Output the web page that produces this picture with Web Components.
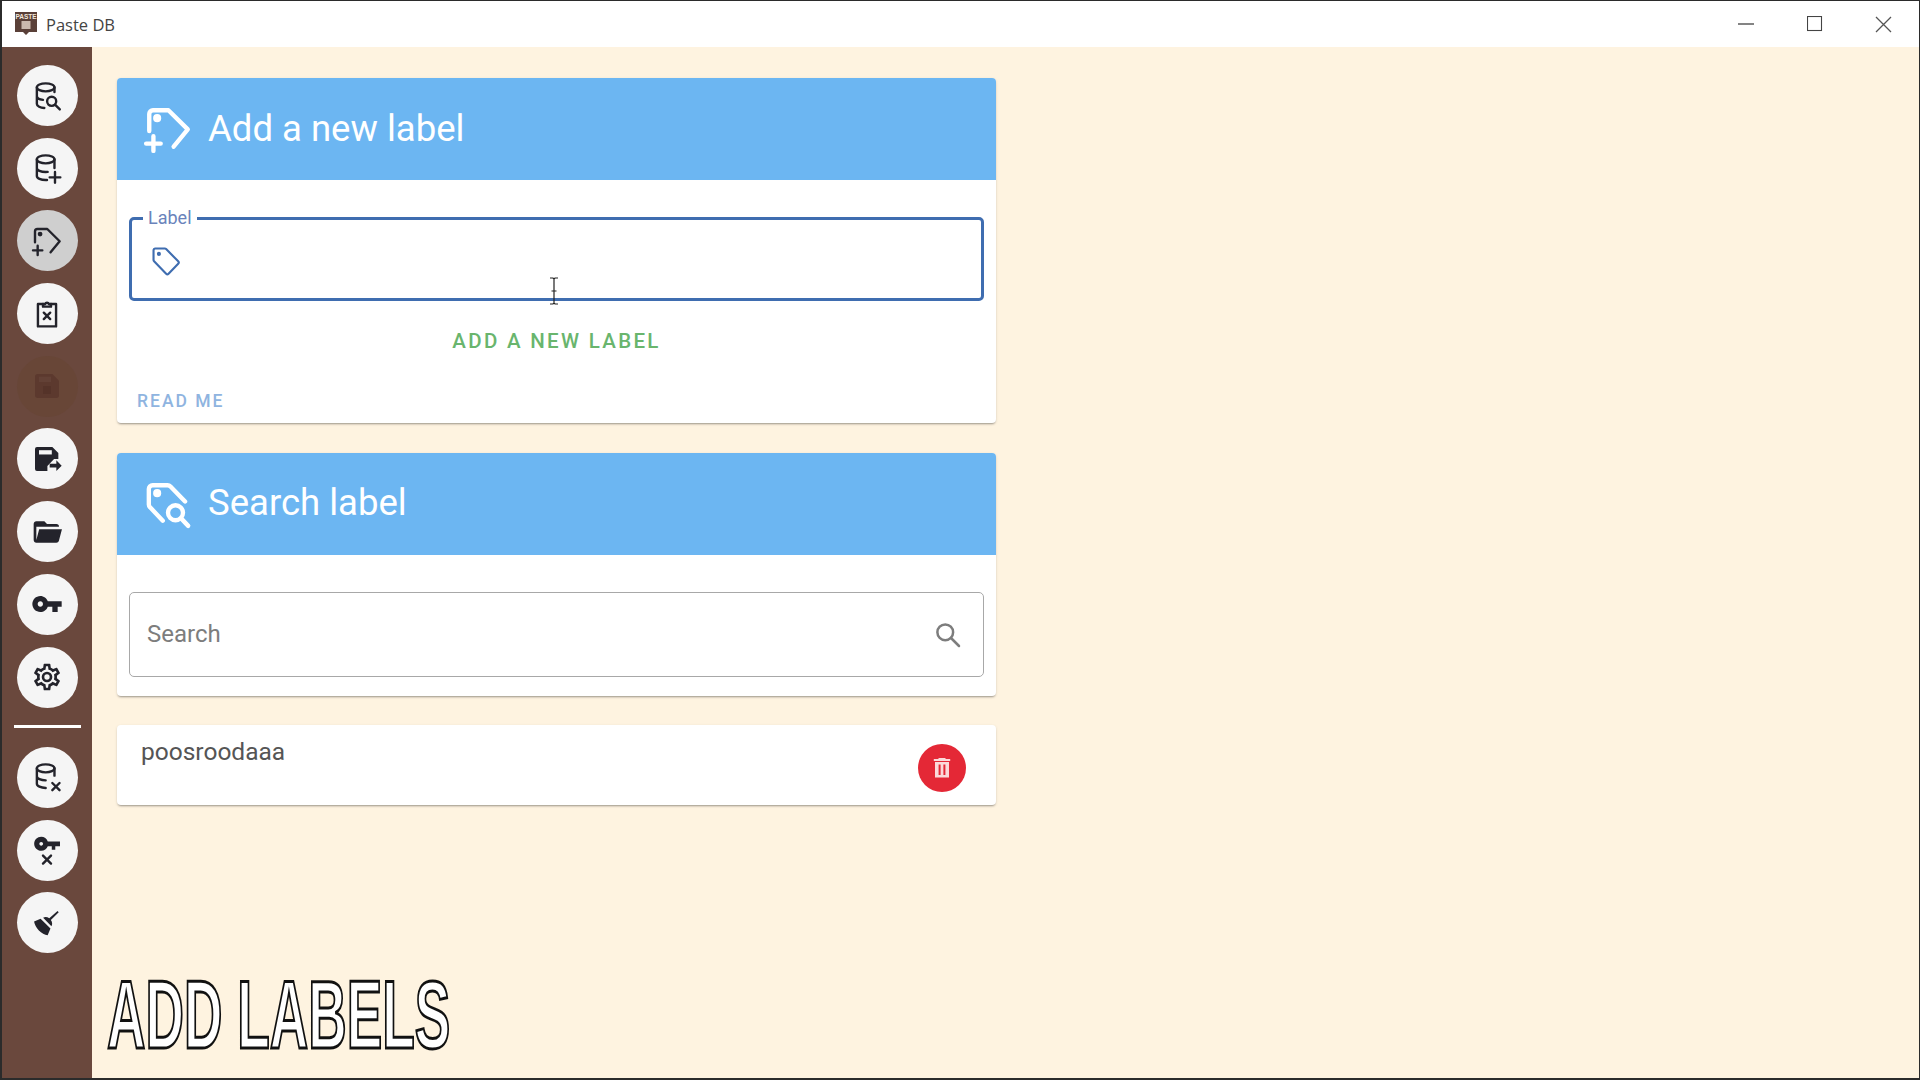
<!DOCTYPE html>
<html lang="en">
<head>
<meta charset="utf-8">
<title>Paste DB</title>
<style>
html, body { margin: 0; height: 100%; background: #fef3e0; }
body { font-family: Roboto, "Liberation Sans", sans-serif; }
</style>
</head>
<body>
<paste-window>
  <rail-button icon="dbSearch"></rail-button>
  <rail-button icon="dbPlus"></rail-button>
  <rail-button icon="tagPlus" state="active"></rail-button>
  <rail-button icon="clipX"></rail-button>
  <rail-button icon="saveDot" state="off"></rail-button>
  <rail-button icon="saveMove"></rail-button>
  <rail-button icon="folder"></rail-button>
  <rail-button icon="key"></rail-button>
  <rail-button icon="cog"></rail-button>
  <rail-rule></rail-rule>
  <rail-button icon="dbX"></rail-button>
  <rail-button icon="keyX"></rail-button>
  <rail-button icon="broom"></rail-button>

  <panel-card slot="main" heading="Add a new label" icon="tagPlus">
    <label-form></label-form>
  </panel-card>
  <panel-card slot="main" heading="Search label" icon="tagSearch">
    <search-field></search-field>
  </panel-card>
  <label-row slot="main" name="poosroodaaa"></label-row>
</paste-window>

<script>
const ICONS = {
  dbSearch: `<g class="s"><ellipse cx="11" cy="5.5" rx="6.6" ry="3"/><path d="M4.4 5.5V18c0 1.6 2.6 2.9 5.6 3M17.6 5.500V9M4.4 12c0 1.5 2 2.6 4.6 2.9"/><circle cx="15.5" cy="16" r="3.4"/><path d="M18 18.500l3.600 3.600"/></g>`,
  dbPlus: `<g class="s"><ellipse cx="11" cy="5.5" rx="6.6" ry="3"/><path d="M4.4 5.5V18c0 1.7 3 3 6.6 3h1M17.6 5.5V12M4.4 12c0 1.7 3 3 6.6 3 .6 0 1 0 1.5-.1M18 15v8M14 19h8"/></g>`,
  dbX: `<g class="s"><ellipse cx="11" cy="5.5" rx="6.6" ry="3"/><path d="M4.4 5.5V17c0 1.8 3 3.200 6.600 3.200M17.600 5.500V11M4.400 11.500c0 1.700 3 3 6.600 3M16 16.500l5.400 5.400M21.400 16.500L16 21.900"/></g>`,
  tagPlus: `<g class="s"><path d="M3 13V4.8C3 3.8 3.800 3 4.800 3h7.400l9.300 9.200-6.800 8.300"/><circle cx="6.800" cy="6.800" r=".9" class="f"/><path d="M5 15.500v7M1.500 19h7"/></g>`,
  tagSearch: `<g class="s"><path d="M9.500 20L3.400 13.600C3 13.200 2.800 12.700 2.800 12.200V4.800C2.800 3.800 3.600 3 4.600 3h7.200c.5 0 1 .2 1.400.6l7 7.200"/><circle cx="6.800" cy="6.800" r=".9" class="f"/><circle cx="15.600" cy="16.200" r="3.600"/><path d="M18.300 18.900l3.400 3.600"/></g>`,
  tag: `<g class="s"><path d="M3.200 4.400c0-.7.5-1.200 1.200-1.200h6.800c.3 0 .6.1.9.4l8.500 8.600c.5.5.5 1.200 0 1.700l-6.800 7.100c-.5.5-1.200.5-1.700 0L3.600 12.200c-.3-.3-.4-.6-.4-.9z"/><circle cx="7" cy="7" r=".7" class="f"/></g>`,
  clipX: `<g class="s"><path d="M9 4.500H5.200v16.800h13.600V4.500H15"/><path d="M9 6.500V4.500h1.600a1.500 1.500 0 0 1 2.800 0H15v2z"/><path d="M9.600 11l4.800 4.800M14.400 11l-4.800 4.800"/></g>`,
  saveDot: `<path d="M5 3h11l5 5v11a2 2 0 0 1-2 2H5a2 2 0 0 1-2-2V5a2 2 0 0 1 2-2z" fill="currentColor"/><rect x="6" y="5" width="9" height="4" fill="#634136"/><rect x="9" y="12" width="6" height="6" fill="#553329"/>`,
  saveMove: `<path d="M4.500 3H16l4.500 4.500V12h-3.200l-5 5.200V21h-7.800A1.500 1.500 0 0 1 3 19.500v-15A1.500 1.500 0 0 1 4.500 3z" fill="currentColor"/><rect x="6" y="5.400" width="9.600" height="3.200" fill="#f5f5f5"/><path d="M14 15.600h5V13l4 4-4 4v-2.600h-5z" fill="currentColor"/>`,
  folder: `<path d="M19 20H4c-1.110 0-2-.9-2-2V6c0-1.110.89-2 2-2h6l2 2h7a2 2 0 0 1 2 2H4v10l2.140-8h17.070l-2.280 8.500c-.23.87-1.010 1.500-1.930 1.500z" fill="currentColor"/>`,
  key: `<path d="M7 14c-1.100 0-2-.9-2-2s.9-2 2-2 2 .9 2 2-.9 2-2 2m5.600-4C11.800 7.700 9.600 6 7 6c-3.300 0-6 2.700-6 6s2.700 6 6 6c2.600 0 4.800-1.700 5.600-4H16v4h4v-4h3v-4H12.600z" fill="currentColor"/>`,
  keyX: `<g transform="translate(1.500 -3.200) scale(.88)"><path d="M7 13.600c-.9 0-1.600-.7-1.600-1.600s.7-1.600 1.600-1.600 1.600.7 1.600 1.600-.7 1.600-1.600 1.600m5.600-3.600C11.800 7.700 9.600 6 7 6c-3.300 0-6 2.700-6 6s2.700 6 6 6c2.600 0 4.800-1.700 5.600-4H16v3h3v-3h4v-4H12.600z" fill="currentColor"/></g><path class="s" d="M9 16.200l6 6M15 16.200l-6 6"/>`,
  cog: `<path fill-rule="evenodd" fill="currentColor" d="M12 8a4 4 0 0 1 4 4 4 4 0 0 1-4 4 4 4 0 0 1-4-4 4 4 0 0 1 4-4m0 2a2 2 0 0 0-2 2 2 2 0 0 0 2 2 2 2 0 0 0 2-2 2 2 0 0 0-2-2m-2 12c-.25 0-.46-.18-.5-.42l-.37-2.650c-.63-.25-1.170-.59-1.690-.99l-2.490 1.010c-.22.08-.49 0-.61-.22l-2-3.460c-.13-.22-.07-.49.12-.64l2.110-1.660L4.500 12l.07-1-2.110-1.630c-.19-.15-.25-.42-.12-.64l2-3.460c.12-.22.39-.31.61-.22l2.490 1c.52-.39 1.060-.73 1.690-.98l.37-2.650c.04-.24.25-.42.5-.42h4c.25 0 .46.18.5.42l.37 2.650c.63.25 1.170.59 1.690.98l2.490-1c.22-.09.49 0 .61.22l2 3.460c.13.22.07.49-.12.64L19.430 11l.07 1-.07 1 2.110 1.630c.19.15.25.42.12.64l-2 3.460c-.12.22-.39.31-.61.22l-2.490-1c-.52.39-1.060.73-1.690.98l-.37 2.650c-.04.24-.25.42-.5.42h-4m1.250-18l-.37 2.610c-1.200.25-2.260.89-3.030 1.780L5.440 7.350l-.75 1.300L6.800 10.200c-.4 1.170-.4 2.440 0 3.600l-2.120 1.560.75 1.300 2.430-1.040c.77.88 1.820 1.520 3.010 1.760l.37 2.620h1.520l.37-2.610c1.190-.25 2.240-.89 3.010-1.770l2.430 1.040.75-1.300-2.120-1.550c.4-1.170.4-2.440 0-3.610l2.110-1.550-.75-1.300-2.410 1.040c-.77-.89-1.830-1.530-3.030-1.770L12.750 4h-1.500z"/>`,
  broom: `<path fill="currentColor" d="M19.900 3l.9.9-5.900 5.900c1.100 1.500 1.300 3.400.4 4.600L9.100 8.100c1.200-.9 3-.8 4.600.3L19.900 3zM5.900 17.600c-2-2-3.200-4.400-3.600-6.700l4.900-2.100 7.400 7.400-2.100 4.900c-2.200-.3-4.600-1.600-6.600-3.500z"/>`,
  magnify: `<g class="s"><circle cx="9.800" cy="9.800" r="6.300"/><path d="M14.400 14.400l6.400 6.400"/></g>`,
  trash: `<path fill="currentColor" fill-rule="evenodd" d="M5 6h14v15.500H5zM3.800 3H8l1-1h6l1 1h4.200v2H3.800zM8.600 8.500v10.500h2V8.500zM13.400 8.500v10.500h2V8.500z"/>`
};

function iconSvg(name, size) {
  return `<svg viewBox="0 0 24 24" width="${size}" height="${size}" aria-hidden="true">
    <style>.s{fill:none;stroke:currentColor;stroke-width:var(--sw,1.7);stroke-linecap:round;stroke-linejoin:round}.f{fill:currentColor}</style>
    ${ICONS[name]}</svg>`;
}

class PasteWindow extends HTMLElement {
  constructor() {
    super();
    this.root = this.attachShadow({mode:'open'});
  }
  connectedCallback() {
    this.root.innerHTML = `
    <style>
    :host { display: grid; grid-template: 46px 1fr / 90px 1fr; height: 100vh; box-sizing: border-box;
      border: 1px solid #2b2b2b; border-left-width: 2px; border-bottom-width: 2px; position: relative; overflow: hidden; }
    header { grid-column: 1 / 3; background: #fff; display: flex; align-items: center; padding-left: 13px; color: #444;
      font: 16.500px "Open Sans", "Noto Sans", sans-serif; }
    header svg { margin-right: 9px; }
    .win { margin-left: auto; margin-right: 1px; display: flex; }
    .win span { width: 69px; height: 46px; display: flex; align-items: center; justify-content: center; }
    .win svg { margin: 0; }
    nav { background: #6a483d; display: flex; flex-direction: column; align-items: center; padding-top: 18px; gap: 11.7px; }
    main { background: #fef3e0; padding: 31px 0 0 25px; display: flex; flex-direction: column; gap: 29.500px; width: 879px; }
    .caption { position: absolute; left: 105px; bottom: 29px; margin: 0; font: 700 96px/68px "Liberation Sans", sans-serif;
      color: #fff; -webkit-text-stroke: 3px #111; transform-origin: left bottom; transform: scaleX(.555); white-space: nowrap; }
    </style>
    <header>
      <svg width="22" height="24" viewBox="0 0 22 24"><path d="M0 0h22v20h-8l-3 3-3-3H0z" fill="#5a4038"/>
        <text x="11" y="7" text-anchor="middle" font-family="Liberation Sans" font-size="6.500" font-weight="700" fill="#f1e6dc">PASTE</text>
        <rect x="6.500" y="9" width="9" height="8" fill="#cbb9ae"/></svg>
      <span>Paste DB</span>
      <div class="win">
        <span><svg width="16" height="16" viewBox="0 0 16 16"><path d="M0 8h16" stroke="#333" stroke-width="1.200"/></svg></span>
        <span><svg width="16" height="16" viewBox="0 0 16 16"><rect x=".5" y=".5" width="14" height="14" fill="none" stroke="#444" stroke-width="1.100"/></svg></span>
        <span><svg width="17" height="17" viewBox="0 0 17 17"><path d="M1 1l15 15M16 1L1 16" stroke="#555" stroke-width="1.300"/></svg></span>
      </div>
    </header>
    <nav><slot></slot></nav>
    <main><slot name="main"></slot></main>
    <p class="caption">ADD LABELS</p>
    `;
  }
}

class RailButton extends HTMLElement {
  constructor() {
    super();
    this.root = this.attachShadow({mode:'open'});
  }
  connectedCallback() {
    this.root.innerHTML = `
    <style>
    :host { display: flex; align-items: center; justify-content: center; width: 61px; height: 61px; border-radius: 50%;
      background: #f5f5f5; color: #23232b; --sw: 1.800; }
    :host([state=active]) { background: #cfcfcf; }
    :host([state=off]) { background: #684637; color: #5c392e; }
    svg { display: block; }
    </style>
    ${iconSvg(this.getAttribute('icon'), 32)}
    `;
  }
}

class RailRule extends HTMLElement {
  constructor() {
    super();
    this.attachShadow({mode:'open'}).innerHTML = `
    <style>:host { display: block; width: 67px; height: 3px; margin: 6px 0 7px; background: #fff; }</style>`;
  }
}

class PanelCard extends HTMLElement {
  constructor() {
    super();
    this.root = this.attachShadow({mode:'open'});
  }
  connectedCallback() {
    this.root.innerHTML = `
    <style>
    :host { display: block; background: #fff; border-radius: 4px; overflow: hidden;
      box-shadow: 0 2px 2px -1px rgba(0,0,0,.3), 0 1px 3px rgba(0,0,0,.12); color: #333; }
    .bar { height: 102px; background: #6cb6f2; color: #fff; display: flex; align-items: center; padding-left: 26px; gap: 15px; --sw: 2.100; }
    h2 { margin: -2px 0 0; font: 400 36.500px Roboto, sans-serif; }
    </style>
    <div class="bar">${iconSvg(this.getAttribute('icon'), 50)}<h2>${this.getAttribute('heading')}</h2></div>
    <slot></slot>
    `;
  }
}

class LabelForm extends HTMLElement {
  constructor() {
    super();
    this.root = this.attachShadow({mode:'open'});
  }
  connectedCallback() {
    this.root.innerHTML = `
    <style>
    :host { display: block; padding: 27px 12px 0; height: 243px; box-sizing: border-box; position: relative; }
    fieldset { margin: 0; padding: 0 0 0 17px; height: 94px; box-sizing: border-box; border: 3px solid #3f6db0; border-radius: 5px;
      display: flex; align-items: center; color: #3f6db0; --sw: 1.500; }
    legend { font: 18px Roboto, sans-serif; color: #6a83bb; padding: 0 5px; margin-left: -6px; line-height: 22px; }
    svg { margin-top: -6px; }
    .add { text-align: center; color: #69b56d; font: 500 20.500px Roboto, sans-serif; letter-spacing: 2.300px; margin-top: 28px; }
    .read { color: #8fb4e0; font: 500 17.500px Roboto, sans-serif; letter-spacing: 2px; margin: 38px 0 0 8px; }
    .cursor { position: absolute; left: 431px; top: 97px; margin: 0; }
    </style>
    <fieldset><legend>Label</legend>${iconSvg('tag', 34)}</fieldset>
    <div class="add">ADD A NEW LABEL</div>
    <div class="read">READ ME</div>
    <svg class="cursor" width="12" height="28" viewBox="0 0 12 28"><path d="M2 1h3l1 1 1-1h3M6 2v24M2 27h3l1-1 1 1h3M3.500 14h5" fill="none" stroke="#222" stroke-width="1.200"/></svg>
    `;
  }
}

class SearchField extends HTMLElement {
  constructor() {
    super();
    this.root = this.attachShadow({mode:'open'});
  }
  connectedCallback() {
    this.root.innerHTML = `
    <style>
    :host { display: block; padding: 37px 12px 19px; }
    .box { height: 85px; box-sizing: border-box; border: 1.500px solid #a8a8a8; border-radius: 5px; display: flex; align-items: center;
      justify-content: space-between; padding: 0 20px 0 17px; color: #7d7d7d; font: 24px Roboto, sans-serif; --sw: 2; }
    svg { margin-top: 2px; }
    </style>
    <div class="box"><span>Search</span>${iconSvg('magnify', 30)}</div>
    `;
  }
}

class LabelRow extends HTMLElement {
  constructor() {
    super();
    this.root = this.attachShadow({mode:'open'});
  }
  connectedCallback() {
    this.root.innerHTML = `
    <style>
    :host { display: flex; justify-content: space-between; height: 80px; background: #fff; border-radius: 4px; padding: 12px 30px 0 24px; box-sizing: border-box;
      box-shadow: 0 2px 2px -1px rgba(0,0,0,.3), 0 1px 3px rgba(0,0,0,.12); color: #555; font: 24.500px Roboto, sans-serif; }
    button { width: 48px; height: 48px; margin-top: 7px; border: 0; padding: 0; border-radius: 50%; background: #e42836; color: #fbd9d9;
      display: flex; align-items: center; justify-content: center; }
    </style>
    <span>${this.getAttribute('name')}</span>
    <button>${iconSvg('trash', 24)}</button>
    `;
  }
}

customElements.define('paste-window', PasteWindow);
customElements.define('rail-button', RailButton);
customElements.define('rail-rule', RailRule);
customElements.define('panel-card', PanelCard);
customElements.define('label-form', LabelForm);
customElements.define('search-field', SearchField);
customElements.define('label-row', LabelRow);
</script>
</body>
</html>
